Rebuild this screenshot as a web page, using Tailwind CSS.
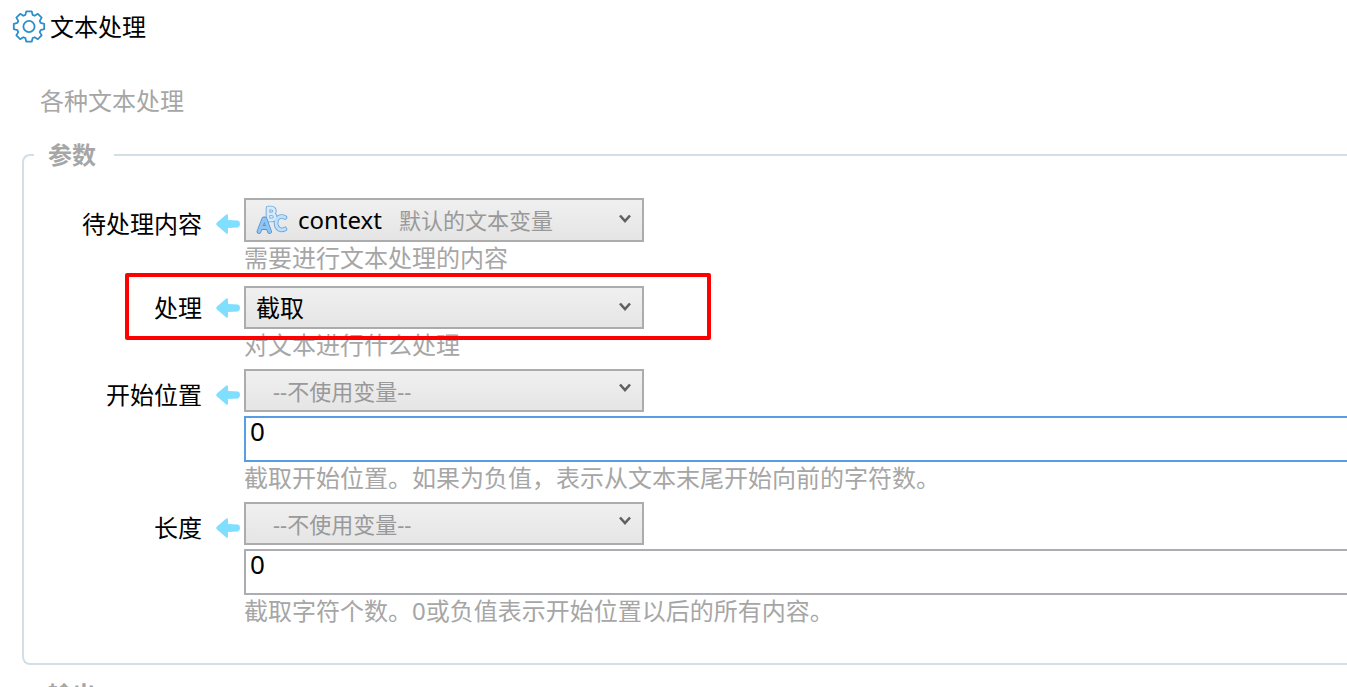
<!DOCTYPE html>
<html lang="zh-CN">
<head>
  <meta charset="UTF-8" />
  <meta name="viewport" content="width=device-width, initial-scale=1.0"/>
  <title>文本处理</title>
  <script src="https://cdn.jsdelivr.net/npm/@tailwindcss/browser@4"></script>
</head>
<body class="h-screen overflow-hidden bg-white text-2xl/8 text-black font-['Noto_Sans','Noto_Sans_CJK_SC',sans-serif]">

  <!-- shapes shared by every row -->
  <svg class="hidden">
    <symbol id="arrow" viewBox="0 0 24 20">
      <path d="M1 8.500 10 .8Q12 -.6 12 1.500V6L22 6.600Q24 7 24 10T22 13.400L12 14V18.500Q12 20.600 10 19.200L1 11.500Q-.5 10 1 8.500Z" fill="#80deff"/>
    </symbol>
    <symbol id="chevron" viewBox="0 0 12 10">
      <path d="M1 1.500 6 7 11 1.500" fill="none" stroke="#606060" stroke-width="2.600"/>
    </symbol>
  </svg>

  <header class="flex items-center gap-1 pt-2.5 pl-3">
    <svg class="size-[34px]" viewBox="-17 -16.500 34 34" fill="none" stroke="#2a8fcb" stroke-width="1.800" stroke-linejoin="round">
      <path d="M-3.600-11.600-2.700-15.200H2.700L3.600-11.600 5.660-10.750 8.840-12.660 12.660-8.840 10.750-5.660 11.600-3.600 15.200-2.700V2.700L11.600 3.600 10.750 5.660 12.660 8.840 8.840 12.660 5.660 10.750 3.600 11.600 2.700 15.200H-2.700L-3.600 11.600-5.660 10.750-8.840 12.660-12.660 8.840-10.750 5.660-11.600 3.600-15.200 2.700V-2.700L-11.600-3.600-10.750-5.660-12.660-8.840-8.840-12.660-5.660-10.750Z"/>
      <circle r="5.600"/>
    </svg>
    <h1>文本处理</h1>
  </header>

  <p class="mt-[41px] pl-10 text-[#a6a6a6]">各种文本处理</p>

  <form>
    <fieldset class="mt-[22px] ml-[22px] rounded-l-lg border-2 border-r-0 border-[#d3dfe6] pb-9 pl-2.5">
      <legend class="pr-[18px] pl-3.5 font-bold text-[#a6a6a6]">参数</legend>

      <div class="flex items-start pt-[27px]">
        <label for="content" class="w-[168px] pt-2.5 text-right">待处理内容</label>
        <svg class="mt-4 mr-1 ml-3.5 h-5 w-6"><use href="#arrow"/></svg>
        <div class="min-w-0 flex-1">
          <div class="relative w-[400px]">
            <select id="content" class="block h-11 w-full appearance-none border-2 border-[#acacac] bg-linear-to-b from-[#f0f0f0] to-[#e5e5e5] pl-[52px]">
              <option>context</option>
            </select>
            <svg class="pointer-events-none absolute top-1.5 left-3 size-8" viewBox="0 0 32 32" fill="none" stroke-linejoin="round" stroke-linecap="round">
              <g stroke="#6da7da" stroke-width="4.600">
                <path d="M12 4v12h4a3 3 0 0 0 0-6.200h-4 3.500a2.900 2.900 0 0 0 0-5.800z"/>
                <path d="M29 13.500c-4.500-2.500-9 0-9 5.500s4.500 8.500 9 6"/>
              </g>
              <path d="M12 4v12h4a3 3 0 0 0 0-6.200h-4 3.500a2.900 2.900 0 0 0 0-5.800z" stroke="#d3ebfc" stroke-width="2.800"/>
              <path d="M29 13.500c-4.500-2.500-9 0-9 5.500s4.500 8.500 9 6" stroke="#c0e0fa" stroke-width="2.800"/>
              <path d="M3 27.500 7.800 15H9l4.500 12.500M5.500 23.500h6" stroke="#5592cc" stroke-width="4.800"/>
              <path d="M3 27.500 7.800 15H9l4.500 12.500M5.500 23.500h6" stroke="#8ec5f6" stroke-width="3.200"/>
            </svg>
            <span class="pointer-events-none absolute top-1.5 left-[155px] text-[22px]/8 text-[#999]">默认的文本变量</span>
            <svg class="pointer-events-none absolute top-4 right-[13px] h-2.5 w-3"><use href="#chevron"/></svg>
          </div>
          <p class="text-[#a6a6a6]">需要进行文本处理的内容</p>
        </div>
      </div>

      <div class="relative mt-3 flex items-start">
        <label for="action" class="w-[168px] pt-1.5 text-right">处理</label>
        <svg class="mt-3 mr-1 ml-3.5 h-5 w-6"><use href="#arrow"/></svg>
        <div class="min-w-0 flex-1">
          <div class="relative w-[400px]">
            <select id="action" class="block h-[43px] w-full appearance-none border-2 border-[#acacac] bg-linear-to-b from-[#f0f0f0] to-[#e5e5e5] pl-2.5">
              <option>截取</option>
            </select>
            <svg class="pointer-events-none absolute top-4 right-[13px] h-2.5 w-3"><use href="#chevron"/></svg>
          </div>
          <p class="text-[#a6a6a6]">对文本进行什么处理</p>
        </div>
        <!-- highlight frame -->
        <div class="pointer-events-none absolute -top-[13px] left-[91px] h-[67px] w-[586px] rounded-xs border-4 border-[#ff0000]"></div>
      </div>

      <div class="mt-2 flex items-start">
        <label for="start" class="w-[168px] pt-2.5 text-right">开始位置</label>
        <svg class="mt-4 mr-1 ml-3.5 h-5 w-6"><use href="#arrow"/></svg>
        <div class="min-w-0 flex-1">
          <div class="relative w-[400px]">
            <select aria-label="开始位置变量" class="block h-[43px] w-full appearance-none border-2 border-[#acacac] bg-linear-to-b from-[#f0f0f0] to-[#e5e5e5] pl-[27px] text-[22px] text-[#999]">
              <option>--不使用变量--</option>
            </select>
            <svg class="pointer-events-none absolute top-3.5 right-[13px] h-2.5 w-3"><use href="#chevron"/></svg>
          </div>
          <input id="start" type="text" value="0" class="mt-1 block h-[46px] w-full border-2 border-r-0 border-[#569de5] pb-4 pl-1 text-[26px] outline-none" />
          <p class="text-[#a6a6a6]">截取开始位置。如果为负值，表示从文本末尾开始向前的字符数。</p>
        </div>
      </div>

      <div class="mt-2 flex items-start">
        <label for="length" class="w-[168px] pt-2.5 text-right">长度</label>
        <svg class="mt-4 mr-1 ml-3.5 h-5 w-6"><use href="#arrow"/></svg>
        <div class="min-w-0 flex-1">
          <div class="relative w-[400px]">
            <select aria-label="长度变量" class="block h-[43px] w-full appearance-none border-2 border-[#acacac] bg-linear-to-b from-[#f0f0f0] to-[#e5e5e5] pl-[27px] text-[22px] text-[#999]">
              <option>--不使用变量--</option>
            </select>
            <svg class="pointer-events-none absolute top-3.5 right-[13px] h-2.5 w-3"><use href="#chevron"/></svg>
          </div>
          <input id="length" type="text" value="0" class="mt-1 block h-[46px] w-full border-2 border-r-0 border-[#abadb3] pb-4 pl-1 text-[26px] outline-none" />
          <p class="text-[#a6a6a6]">截取字符个数。0或负值表示开始位置以后的所有内容。</p>
        </div>
      </div>
    </fieldset>

    <fieldset class="mt-3.5 ml-[22px] rounded-l-lg border-2 border-r-0 border-[#d3dfe6] pb-9 pl-2.5">
      <legend class="pr-[18px] pl-3.5 font-bold text-[#a6a6a6]">输出</legend>
    </fieldset>
  </form>

</body>
</html>
